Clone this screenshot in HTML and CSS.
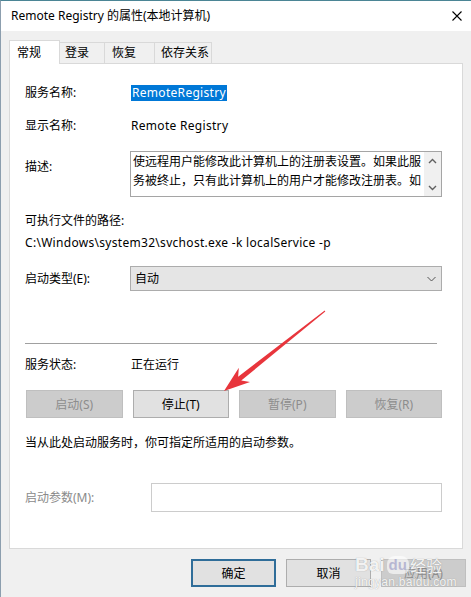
FILE: index.html
```html
<!DOCTYPE html>
<html lang="zh-CN">
<head>
    <meta charset="UTF-8">
    <title>Remote Registry 的属性(本地计算机)</title>
    <link rel="stylesheet" href="styles.css">
</head>
<body>
<div class="window">
    <div class="titlebar">
        <span class="title">Remote Registry 的属性(本地计算机)</span>
        <svg class="close" width="10" height="10" viewBox="0 0 10 10">
            <path d="M0.5 0.5 L9.5 9.5 M9.5 0.5 L0.5 9.5" stroke="#000" stroke-width="1.1" fill="none"/>
        </svg>
    </div>

    <div class="content">
        <div class="tabs">
            <div class="tab tab-active">常规</div>
            <div class="tab tab-login">登录</div>
            <div class="tab tab-recover">恢复</div>
            <div class="tab tab-deps">依存关系</div>
        </div>

        <div class="panel">
            <div class="row r-name">
                <span class="label">服务名称:</span>
                <span class="selected latin">RemoteRegistry</span>
            </div>
            <div class="row r-display">
                <span class="label">显示名称:</span>
                <span class="value latin">Remote Registry</span>
            </div>
            <div class="row r-desc">
                <span class="label desc-label">描述:</span>
                <div class="textbox">
                    <div class="textbox-text">
                        使远程用户能修改此计算机上的注册表设置。如果此服<br>
                        务被终止，只有此计算机上的用户才能修改注册表。如
                    </div>
                    <div class="scrollbar">
                        <svg width="9" height="6" viewBox="0 0 9 6"><path d="M1 5 L4.5 1.5 L8 5" stroke="#606060" stroke-width="1.4" fill="none"/></svg>
                        <svg width="9" height="6" viewBox="0 0 9 6"><path d="M1 1 L4.5 4.5 L8 1" stroke="#606060" stroke-width="1.4" fill="none"/></svg>
                    </div>
                </div>
            </div>
            <div class="row r-path-label">可执行文件的路径:</div>
            <div class="row r-path latin">C:\Windows\system32\svchost.exe -k localService -p</div>
            <div class="row r-type">
                <span class="label">启动类型(E):</span>
                <div class="dropdown">
                    <span>自动</span>
                    <svg width="9" height="6" viewBox="0 0 9 6"><path d="M0.5 1 L4.5 5 L8.5 1" stroke="#555" stroke-width="1" fill="none"/></svg>
                </div>
            </div>

            <div class="separator"></div>

            <div class="row r-status">
                <span class="label">服务状态:</span>
                <span class="value">正在运行</span>
            </div>
            <div class="service-buttons">
                <button class="btn btn-disabled">启动(S)</button>
                <button class="btn">停止(T)</button>
                <button class="btn btn-disabled">暂停(P)</button>
                <button class="btn btn-disabled">恢复(R)</button>
            </div>
            <div class="row hint">当从此处启动服务时，你可指定所适用的启动参数。</div>
            <div class="row r-params">
                <span class="label params-label">启动参数(M):</span>
                <div class="params-input"></div>
            </div>
        </div>

        <div class="footer">
            <button class="btn btn-default">确定</button>
            <button class="btn">取消</button>
            <button class="btn btn-disabled">应用(A)</button>
        </div>
    </div>

    <!-- red pointer arrow drawn over the dialog -->
    <svg class="arrow" width="471" height="597" viewBox="0 0 471 597">
        <polygon fill="#e8353c" points="325.3,311.4 241.25,380.56 250,381.95 224,391 238.83,367.81 238.15,376.64 324.7,310.6"/>
    </svg>

    <div class="watermark">
        <div class="wm-logo">
            <span class="wm-bai">Bai</span>
            <span class="wm-du">du</span>
            <span class="wm-jy">经验</span>
        </div>
        <div class="wm-url">jingyan.baidu.com</div>
    </div>
</div>
</body>
</html>
```

FILE: styles.css
```css
body {
    margin: 0;
    font-family: "Noto Sans", "Noto Sans CJK SC", sans-serif;
    font-size: 12px;
    color: #000;
}

.window {
    width: 471px;
    height: 597px;
    box-sizing: border-box;
    background: #f0f0f0;
    border-top: 1px solid #4b8595;
    border-left: 1px solid #8c9eae;
    position: relative;
    overflow: hidden;
}

.titlebar {
    height: 30px;
    background: #fff;
    display: flex;
    align-items: center;
    justify-content: space-between;
    padding: 0 9px 0 10px;
}

.title {
    line-height: 16px;
}

.content {
    padding-left: 8px;
}

.latin {
    letter-spacing: 0.3px;
}

/* tabs */
.tabs {
    display: flex;
    height: 24px;
    margin-top: 9px;
}

.tab {
    box-sizing: border-box;
    height: 21px;
    margin-top: 2px;
    line-height: 20px;
    border: 1px solid #d9d9d9;
    border-left: none;
    border-bottom: none;
    background: #f0f0f0;
}

.tab-active {
    position: relative;
    z-index: 1;
    width: 51px;
    height: 24px;
    margin-top: 0;
    padding-left: 7px;
    line-height: 23px;
    background: #fff;
    border-left: 1px solid #d9d9d9;
}

.tab-login {
    width: 45px;
    padding-left: 5px;
}

.tab-recover {
    width: 50px;
    padding-left: 7px;
}

.tab-deps {
    width: 57px;
    padding-left: 6px;
}

/* general panel */
.panel {
    width: 454px;
    height: 486px;
    box-sizing: border-box;
    margin-top: -1px;
    background: #fff;
    border: 1px solid #d9d9d9;
    padding: 21px 20px 0 15px;
}

.row {
    display: flex;
    align-items: center;
    line-height: 16px;
}

.label {
    width: 106px;
    flex-shrink: 0;
}

.selected {
    background: #0078d7;
    color: #fff;
    padding: 0 1px 0 1px;
    line-height: 16px;
}

.r-display {
    margin-top: 17px;
}

.r-desc {
    margin-top: 17px;
    align-items: flex-start;
}

.desc-label {
    margin-top: 8px;
}

.textbox {
    width: 312px;
    height: 46px;
    margin-left: -1px;
    box-sizing: border-box;
    border: 1px solid #a5a5a5;
    display: flex;
    overflow: hidden;
}

.textbox-text {
    flex: 1;
    padding-left: 2px;
    line-height: 19px;
    white-space: nowrap;
    overflow: hidden;
}

.scrollbar {
    width: 17px;
    background: #f0f0f0;
    display: flex;
    flex-direction: column;
    align-items: center;
    justify-content: space-between;
    padding: 6px 0 5px;
    box-sizing: border-box;
}

.r-path-label {
    margin-top: 16px;
}

.r-path {
    margin-top: 6px;
}

.r-type {
    margin-top: 15px;
}

.dropdown {
    width: 312px;
    height: 25px;
    margin-left: -1px;
    box-sizing: border-box;
    background: #e5e5e5;
    border: 1px solid #acacac;
    display: flex;
    align-items: center;
    justify-content: space-between;
    padding: 0 5px 0 4px;
}

.separator {
    width: 412px;
    height: 1px;
    margin-top: 52px;
    background: #a0a0a0;
}

.r-status {
    margin-top: 13px;
}

.service-buttons {
    display: grid;
    grid-template-columns: repeat(4, 1fr);
    gap: 10px;
    margin: 17px 0 0 1px;
}

.btn {
    height: 28px;
    box-sizing: border-box;
    font-family: inherit;
    font-size: 12px;
    color: #000;
    background: #e1e1e1;
    border: 1px solid #adadad;
    padding: 0;
}

.btn-disabled {
    background: #cccccc;
    border-color: #bfbfbf;
    color: #8d8d8d;
}

.btn-default {
    border: 2px solid #2f6d99;
}

.hint {
    margin-top: 17px;
}

.r-params {
    margin-top: 32px;
}

.params-label {
    width: 126px;
    color: #8a8a8a;
}

.params-input {
    width: 291px;
    height: 29px;
    box-sizing: border-box;
    border: 1px solid #cccccc;
    background: #fff;
}

/* dialog buttons */
.footer {
    display: flex;
    justify-content: flex-end;
    gap: 10px;
    margin-top: 10px;
    padding-right: 5px;
}

.footer .btn {
    width: 85px;
}

/* overlays */
.arrow {
    position: absolute;
    left: -1px;
    top: -1px;
    pointer-events: none;
}

.watermark {
    position: absolute;
    left: 354px;
    top: 541px;
    width: 92px;
    color: rgba(255, 255, 255, 0.9);
    text-shadow: 0 0 1px rgba(120, 120, 120, 0.7);
    pointer-events: none;
}

.wm-logo {
    display: flex;
    align-items: flex-end;
    height: 33px;
}

.wm-bai {
    font-family: "Liberation Sans", sans-serif;
    font-weight: bold;
    font-size: 19px;
    line-height: 20px;
}

.wm-du {
    font-family: "Liberation Sans", sans-serif;
    font-weight: bold;
    font-size: 15px;
    line-height: 18px;
    padding: 0 2px;
    margin: 0 1px 1px 2px;
    border-radius: 8px 8px 6px 6px;
    background: rgba(255, 255, 255, 0.6);
    color: rgba(160, 160, 200, 0.7);
    text-shadow: none;
}

.wm-jy {
    font-family: "Noto Sans CJK SC", sans-serif;
    font-size: 16px;
    line-height: 20px;
}

.wm-url {
    font-family: "Liberation Sans", sans-serif;
    font-size: 12px;
    line-height: 14px;
    letter-spacing: 0.3px;
}
```
